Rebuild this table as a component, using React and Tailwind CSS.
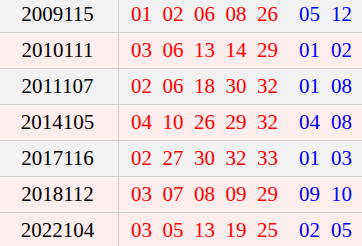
const ROWS = [
  { issue: '2009115', red: ['01', '02', '06', '08', '26'], blue: ['05', '12'], bg: 'bg-[#f2f2f2]' },
  { issue: '2010111', red: ['03', '06', '13', '14', '29'], blue: ['01', '02'], bg: 'bg-[#fdeded]' },
  { issue: '2011107', red: ['02', '06', '18', '30', '32'], blue: ['01', '08'], bg: 'bg-[#f2f2f2]' },
  { issue: '2014105', red: ['04', '10', '26', '29', '32'], blue: ['04', '08'], bg: 'bg-[#fdeded]' },
  { issue: '2017116', red: ['02', '27', '30', '32', '33'], blue: ['01', '03'], bg: 'bg-[#f2f2f2]' },
  { issue: '2018112', red: ['03', '07', '08', '09', '29'], blue: ['09', '10'], bg: 'bg-[#fdeded]' },
  { issue: '2022104', red: ['03', '05', '13', '19', '25'], blue: ['02', '05'], bg: 'bg-[#fdeded]' },
];

export default function App() {
  return (
    <div className="h-[246px] w-[362px] overflow-hidden bg-white font-['Liberation_Serif',serif] text-[21px] leading-none">
      <div className="-mt-[3px]">
        {ROWS.map((row) => (
          <div key={row.issue} className={`flex h-[36px] border-b border-[#d2d2d2] ${row.bg}`}>
            <div className="flex w-[119px] shrink-0 items-center justify-center border-r border-[#d2d2d2] pr-[3px] text-black">
              {row.issue}
            </div>
            <div className="flex items-center pl-[12px]">
              <div className="flex gap-[10.5px] text-[#ff0000]">
                {row.red.map((n, i) => <span key={i}>{n}</span>)}
              </div>
              <div className="ml-[21px] flex gap-[11px] text-[#0000ff]">
                {row.blue.map((n, i) => <span key={i}>{n}</span>)}
              </div>
            </div>
          </div>
        ))}
      </div>
    </div>
  );
}
